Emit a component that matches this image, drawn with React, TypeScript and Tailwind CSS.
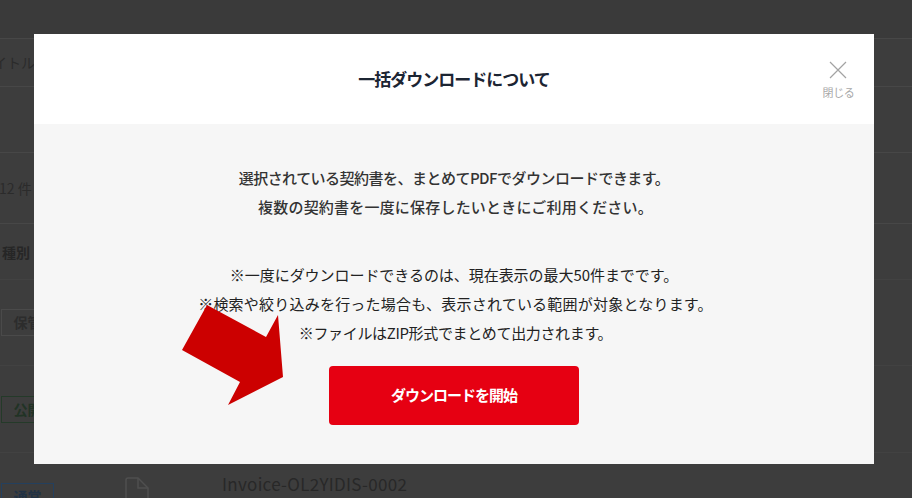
const font = { fontFamily: '"Noto Sans CJK JP", "Noto Sans", sans-serif' };

const Tag = ({ label, className }: { label: string; className: string }) => (
  <span className={`inline-flex h-[27px] w-[53px] items-center justify-center border text-[14px] font-bold ${className}`}>
    {label}
  </span>
);

export default function App() {
  return (
    <div className="relative h-[498px] w-[912px] overflow-hidden bg-[#3d3d3d]" style={font}>
      {/* page behind the overlay */}
      <div className="h-[38px] bg-[#3a3a3a]" />
      <div className="flex h-[49px] items-center border-y border-[#474747] text-[14px] text-[#2b2b2b]">
        <span className="-ml-[7px]">イトル名</span>
      </div>
      <div className="h-[66px] border-b border-[#474747]" />
      <div className="flex h-[71px] items-center border-b border-[#474747] text-[14px] text-[#2b2b2b]">
        <span className="-ml-[1px]">12 件</span>
      </div>
      <div className="flex h-[56px] items-center border-b border-[#424242] pt-[2px] text-[14px] font-bold text-[#262626]">
        <span className="pl-[2px]">種別</span>
      </div>
      <div className="flex h-[86px] items-center border-b border-[#424242] pl-[1px]">
        <Tag label="保管" className="border-[#4a4a4a] text-[#2c2c2c]" />
      </div>
      <div className="flex h-[87px] items-center border-b border-[#424242] pl-[1px]">
        <Tag label="公開" className="border-[#243a29] text-[#213325]" />
      </div>
      <div className="flex items-start gap-[71px] pl-[1px] pt-[30px]">
        <Tag label="通常" className="border-[#24405e] text-[#213245]" />
        <svg className="mt-[-6px]" width="25" height="30" viewBox="0 0 25 30" fill="none" stroke="#4f4f4f" strokeWidth="1.5">
          <path d="M1 3a2 2 0 0 1 2-2h10l10 10v16a2 2 0 0 1-2 2H3a2 2 0 0 1-2-2z" />
          <path d="M13 1v10h10" />
        </svg>
        <span className="mt-[-11px] ml-[1px] text-[17px] leading-[24px] tracking-[0.3px] text-[#282828]">
          Invoice-OL2YIDIS-0002
        </span>
      </div>

      {/* modal */}
      <div className="absolute left-[34px] top-[34px] flex h-[430px] w-[840px] flex-col bg-[#f6f6f6]">
        <div className="relative flex h-[90px] items-center justify-center bg-white">
          <h2 className="text-[17px] font-bold tracking-[-1px] text-[#1c2533]">一括ダウンロードについて</h2>
          <button className="absolute right-[20px] top-[27px] flex w-[31px] flex-col items-center text-[#a8a8a8]">
            <svg className="mr-[1px]" width="18" height="18" viewBox="0 0 18 18" stroke="#a3a3a3" strokeWidth="1.2" fill="none">
              <path d="M1 1l16 16M17 1L1 17" />
            </svg>
            <span className="mt-[5px] whitespace-nowrap text-[11px] leading-[16px] tracking-[-0.3px]">閉じる</span>
          </button>
        </div>
        <div className="flex flex-1 flex-col items-center pt-[39px] text-[#333333]">
          <div className="text-center text-[15px] font-medium leading-[29px]">
            <p className="tracking-[-0.52px]">選択されている契約書を、まとめてPDFでダウンロードできます。</p>
            <p className="pl-[3px] tracking-[0.2px]">複数の契約書を一度に保存したいときにご利用ください。</p>
          </div>
          <div className="mt-[39px] text-center text-[15px] leading-[29px] text-[#222222]">
            <p className="tracking-[-0.05px]">※一度にダウンロードできるのは、現在表示の最大50件までです。</p>
            <p className="pl-[3px] tracking-[0.22px]">※検索や絞り込みを行った場合も、表示されている範囲が対象となります。</p>
            <p className="pl-[3px] tracking-[-0.35px]">※ファイルはZIP形式でまとめて出力されます。</p>
          </div>
          <button className="mt-[19px] h-[59px] w-[250px] rounded-[4px] bg-[#e60012] text-[15px] font-bold tracking-[-1px] text-white">
            ダウンロードを開始
          </button>
        </div>
      </div>

      {/* annotation arrow */}
      <svg className="absolute left-0 top-0" width="912" height="498" viewBox="0 0 912 498">
        <polygon points="207,305 266,337 278,315 283,377 228,405 240,382 182,350" fill="#cc0000" />
      </svg>
    </div>
  );
}
